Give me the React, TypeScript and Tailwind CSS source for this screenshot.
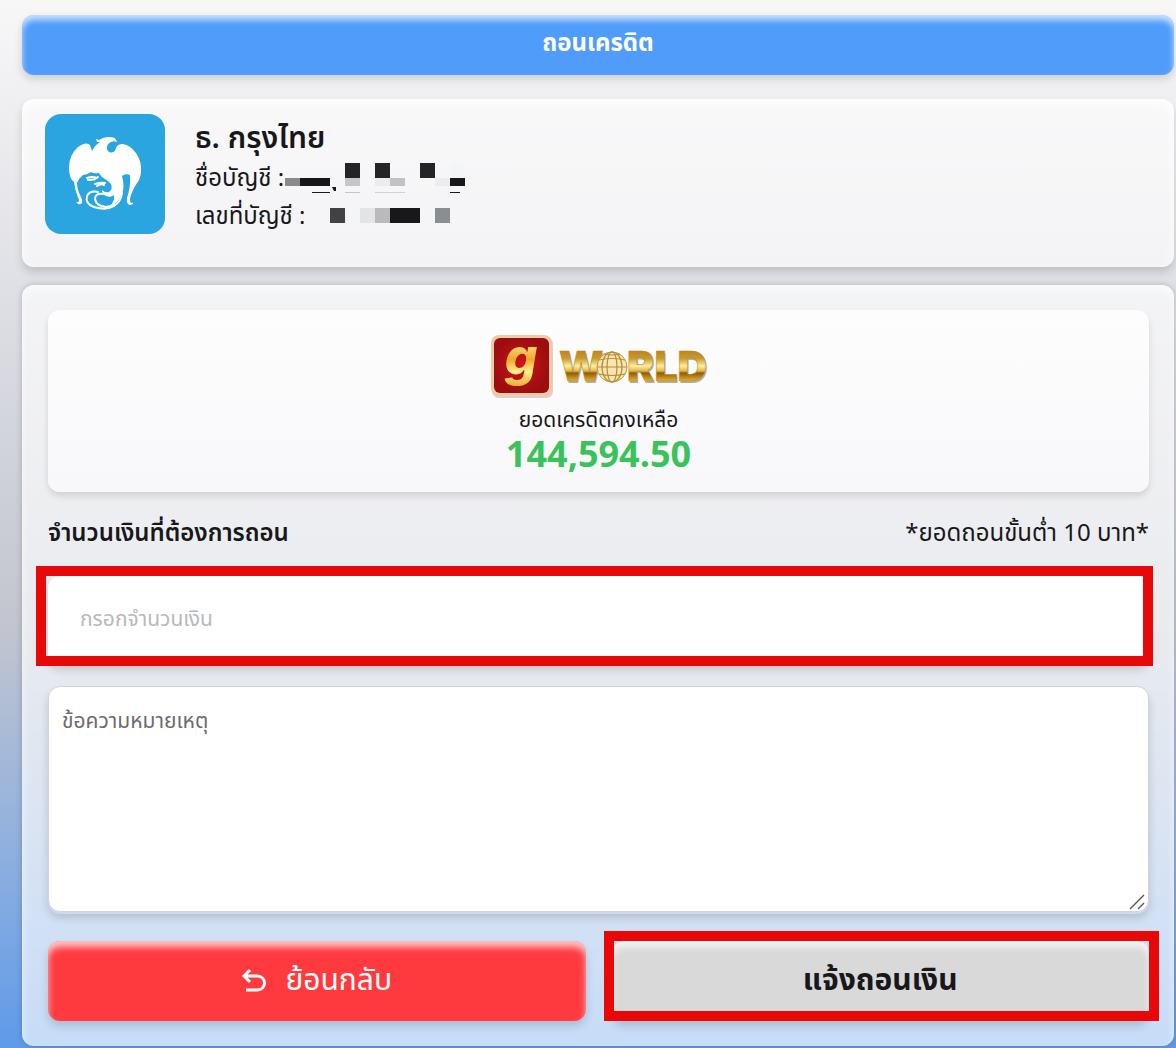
import { useState } from 'react'
import type { ReactNode } from 'react'

// ---------------------------------------------------------------------------
// Logos and icons
// ---------------------------------------------------------------------------

function KrungthaiLogo() {
  return (
    <svg viewBox="0 0 120 120" className="size-[120px] shrink-0 rounded-2xl bg-[#2aa5df]" role="img" aria-label="Krungthai">
      {/* Body, wings and tail */}
      <path
        fill="#fff"
        d="M52 28 L51 25 L54 26 Q60 22 68 23.5 Q71 24 72 28 Q67 26 63 30 Q60 36 65 38.5 Q70 39 71 34 Q72 30 78 30 Q85 31 91 39 Q97 48 96 58 Q95 66 92 69 Q88 75 86 81 Q84 86 86 89 L88 88.5 Q88 91 85 91 Q81 90 82 84 Q86 72 85 61 Q80 59 77 62 Q80 73 77 80 Q74 88 66 91 Q70 86 69 81 Q66 84 61 82 Q57 80 57 76 Q60 79 64 78 Q68 75 66 70 Q62 66 60 65 Q56 63 54 59 Q49 60 46 58 Q42 61 38 61 Q34 64 32 69 Q32 73 34 79 Q38 86 37 89 Q34 92 31 88 Q34 89 34 86 Q30 77 29 68 Q24 64 24 54 Q24 41 33 33 Q41 27 45 31 Q46 34 47 37 Q50 31 55 28 Z"
      />
      <g fill="none" stroke="#fff" strokeLinecap="round" strokeWidth="2">
        {/* Claws */}
        <path d="M42 64 Q47 62 52 64 M43 66 L49 65.5 L53 63 M50 70 Q56 68 60 69 M52 72 Q57 69 59 71" />
        {/* Tail curls */}
        <path d="M53 78 Q45 76 42 82 Q40 90 49 93 Q61 97 69 92 Q76 88 77 79" />
        <path d="M58 80 Q50 79 50 85 Q51 92 61 93 Q70 92 73 84" />
      </g>
    </svg>
  )
}

function WorldLogo() {
  return (
    <svg viewBox="-1 -8 220 74" className="h-[74px] w-[220px]" role="img" aria-label="g WORLD">
      <defs>
        <linearGradient id="gold" x1="0" y1="0" x2="0" y2="1">
          <stop offset="0.15" stopColor="#b98018" />
          <stop offset="0.35" stopColor="#c99a2c" />
          <stop offset="0.5" stopColor="#fbeea0" />
          <stop offset="0.6" stopColor="#e0b648" />
          <stop offset="0.64" stopColor="#8f5c08" />
          <stop offset="0.78" stopColor="#d9a62c" />
          <stop offset="0.9" stopColor="#f5d977" />
        </linearGradient>
        <linearGradient id="mark" x1="0" y1="0" x2="0" y2="1">
          <stop offset="0.2" stopColor="#fdf08e" />
          <stop offset="0.55" stopColor="#f0a830" />
          <stop offset="0.75" stopColor="#fff08a" />
          <stop offset="1" stopColor="#e8a830" />
        </linearGradient>
        <radialGradient id="tile">
          <stop offset="0" stopColor="#cf1418" />
          <stop offset="1" stopColor="#9d0d10" />
        </radialGradient>
      </defs>
      <rect x="2" y="3" width="61" height="61" rx="7" fill="#b9a89a" opacity="0.5" />
      <rect x="1" y="1" width="61" height="61" rx="8" fill="#efcaa6" />
      <rect x="4" y="4" width="55" height="55" rx="6" fill="url(#tile)" />
      <text x="31" y="41" textAnchor="middle" fontSize="51" className="font-[Inter] font-extrabold italic" fill="url(#mark)">
        g
      </text>
      <g fontSize="41" className="font-[Inter] font-black">
        <g fill="#8d7a58" opacity="0.6">
          <text x="70" y="49">W</text>
          <text x="138" y="49">RLD</text>
        </g>
        <g fill="url(#gold)" stroke="#b98322" strokeWidth="0.5">
          <text x="69" y="47">W</text>
          <text x="137" y="47">RLD</text>
        </g>
      </g>
      {/* Globe */}
      <circle cx="122" cy="33" r="15" fill="#f6e6b4" stroke="#c4963c" strokeWidth="1" />
      <g fill="none" stroke="#b98b34" strokeWidth="1.2">
        <ellipse cx="122" cy="33" rx="5" ry="15" />
        <ellipse cx="122" cy="33" rx="10" ry="15" />
        <path d="M107 33 H137 M109 26 Q122 23 135 26 M109 40 Q122 43 135 40 M114 20 Q122 22 130 20" />
      </g>
    </svg>
  )
}

function BackArrow() {
  return (
    <svg viewBox="0 0 26 26" className="size-[26px]" fill="none" stroke="currentColor" strokeWidth="3" aria-hidden="true">
      <path d="M9 2 L3 8 L9 14 M3 8 H16 C26 8 26 22 16 22 H5" />
    </svg>
  )
}

// ---------------------------------------------------------------------------
// Masked account details
// ---------------------------------------------------------------------------

function MaskedName() {
  return (
    <svg viewBox="0 0 182 38" className="h-[38px] w-[182px]" role="img" aria-label="ซ่อนชื่อบัญชี">
      <g fill="#242426">
        <rect x="61" y="3" width="15" height="15" />
        <rect x="91" y="3" width="15" height="15" />
        <rect x="136" y="3" width="15" height="15" />
      </g>
      <rect x="166" y="3" width="15" height="15" fill="#f4f5f6" />
      <rect x="1" y="18" width="15" height="8" fill="#8a8a8c" />
      <rect x="16" y="18" width="30" height="8" fill="#18181a" />
      <rect x="61" y="18" width="15" height="8" fill="#c6c6ca" />
      <rect x="91" y="18" width="15" height="8" fill="#ececee" />
      <rect x="106" y="18" width="15" height="8" fill="#c2c2c6" />
      <rect x="151" y="18" width="15" height="8" fill="#ececee" />
      <rect x="166" y="18" width="15" height="8" fill="#18181a" />
      <path d="M48 27 h4 v4 h-2 z" fill="#18181a" />
      <rect x="28" y="32" width="18" height="1" fill="#18181a" />
      <rect x="61" y="32" width="15" height="1" fill="#c6c6ca" />
      <rect x="91" y="32" width="30" height="1" fill="#d0d0d4" />
      <rect x="166" y="32" width="10" height="1" fill="#18181a" />
    </svg>
  )
}

function MaskedNumber() {
  return (
    <svg viewBox="0 0 150 38" className="h-[38px] w-[150px]" role="img" aria-label="ซ่อนเลขที่บัญชี">
      <rect x="25" y="10" width="15" height="15" fill="#424245" />
      <rect x="55" y="10" width="15" height="15" fill="#e2e4e5" />
      <rect x="70" y="10" width="15" height="15" fill="#bababc" />
      <rect x="85" y="10" width="30" height="15" fill="#18181a" />
      <rect x="130" y="10" width="15" height="15" fill="#8a8e90" />
    </svg>
  )
}

// ---------------------------------------------------------------------------
// Highlight frame
// ---------------------------------------------------------------------------

function Highlight({ frame, children }: { frame: string; children: ReactNode }) {
  return (
    <div className="relative flex">
      {children}
      <span aria-hidden="true" className={`pointer-events-none absolute border-10 border-[#e80808] ${frame}`} />
    </div>
  )
}

// ---------------------------------------------------------------------------
// Page
// ---------------------------------------------------------------------------

export default function App() {
  const [amount, setAmount] = useState('')
  const [note, setNote] = useState('')

  return (
    <div className="min-h-screen bg-linear-to-b from-[#f8f7f8] via-[#c2c5cf] via-60% to-[#5e9ae9] pt-[15px] pr-0.5 pb-px pl-[22px] font-['Noto_Sans_Thai','Noto_Sans',sans-serif] text-[#18181b]">
      <h1 className="h-[60px] rounded-xl bg-[#4f9cfa] pt-2 text-center text-2xl leading-[42px] font-bold text-white shadow-[0_4px_8px_rgba(0,0,0,0.15),inset_0_5px_6px_rgba(255,255,255,0.7)]">
        ถอนเครดิต
      </h1>

      <section className="mt-6 flex h-[168px] gap-[30px] rounded-xl bg-white/60 px-[23px] pt-[15px] shadow-[0_5px_8px_rgba(0,0,0,0.15),inset_0_5px_12px_rgba(255,255,255,0.9)]">
        <KrungthaiLogo />
        <div className="pt-1">
          <h2 className="text-[30px] leading-[42px] font-semibold">ธ. กรุงไทย</h2>
          <p className="flex items-center text-2xl leading-[38px]">
            ชื่อบัญชี :<MaskedName />
          </p>
          <p className="flex items-center text-2xl leading-[38px]">
            เลขที่บัญชี :<MaskedNumber />
          </p>
        </div>
      </section>

      <section className="mt-[18px] rounded-xl bg-white/65 py-[25px] pr-[25px] pl-[26px] shadow-[0_0_6px_rgba(0,0,0,0.2),inset_0_5px_8px_rgba(255,255,255,0.6)]">
        <div className="flex h-[182px] flex-col items-center rounded-xl bg-linear-to-b from-[#fdfdfe] to-[#f8f8fa] pt-4 shadow-[0_4px_6px_rgba(0,0,0,0.12)]">
          <WorldLogo />
          <p className="mt-1 text-[21px] leading-[34px]">ยอดเครดิตคงเหลือ</p>
          <p className="text-4xl leading-9 font-bold text-[#3ac25b]">144,594.50</p>
        </div>

        <div className="flex h-[84px] items-center justify-between text-2xl">
          <label htmlFor="amount" className="font-semibold">
            จำนวนเงินที่ต้องการถอน
          </label>
          <span>*ยอดถอนขั้นต่ำ 10 บาท*</span>
        </div>

        <Highlight frame="-top-2.5 -right-1 bottom-0 -left-3">
          <input
            id="amount"
            inputMode="decimal"
            value={amount}
            onChange={(e) => setAmount(e.target.value)}
            placeholder="กรอกจำนวนเงิน"
            className="h-[90px] w-full rounded-xl bg-white px-8 pb-1 text-[21px] shadow-[0_4px_8px_rgba(0,0,0,0.15)] outline-none placeholder:text-[#b9b9bb]"
          />
        </Highlight>

        <div className="relative mt-5 flex">
          <textarea
            aria-label="ข้อความหมายเหตุ"
            value={note}
            onChange={(e) => setNote(e.target.value)}
            placeholder="ข้อความหมายเหตุ"
            className="h-[226px] w-full resize-none rounded-xl border border-[#d2d3de] bg-white px-[13px] py-[18px] text-[21px] leading-[34px] shadow-[0_2px_0_#d0d8ea,0_6px_8px_rgba(0,0,0,0.15)] outline-none placeholder:text-[#6c6c6e]"
          />
          <svg viewBox="0 0 16 16" className="pointer-events-none absolute right-1 bottom-0.5 size-4" stroke="#555" strokeWidth="1.4" aria-hidden="true">
            <path d="M1 15 L15 1 M9 15 L15 9" />
          </svg>
        </div>

        <div className="mt-[29px] grid grid-cols-2 gap-[26px]">
          <button
            type="button"
            className="flex h-20 items-center justify-center gap-[18px] rounded-xl bg-[#ff3a3f] text-[30px] text-white shadow-[0_5px_8px_rgba(0,0,0,0.15),inset_0_6px_7px_rgba(255,255,255,0.7)]"
          >
            <BackArrow />
            ย้อนกลับ
          </button>
          <Highlight frame="-right-2.5 -left-2 -top-2.5 bottom-0">
            <button
              type="button"
              className="h-20 w-full rounded-xl bg-[#d9d9d9] text-[30px] font-bold shadow-[0_5px_8px_rgba(0,0,0,0.15),inset_0_6px_7px_rgba(255,255,255,0.7)]"
            >
              แจ้งถอนเงิน
            </button>
          </Highlight>
        </div>
      </section>
    </div>
  )
}
